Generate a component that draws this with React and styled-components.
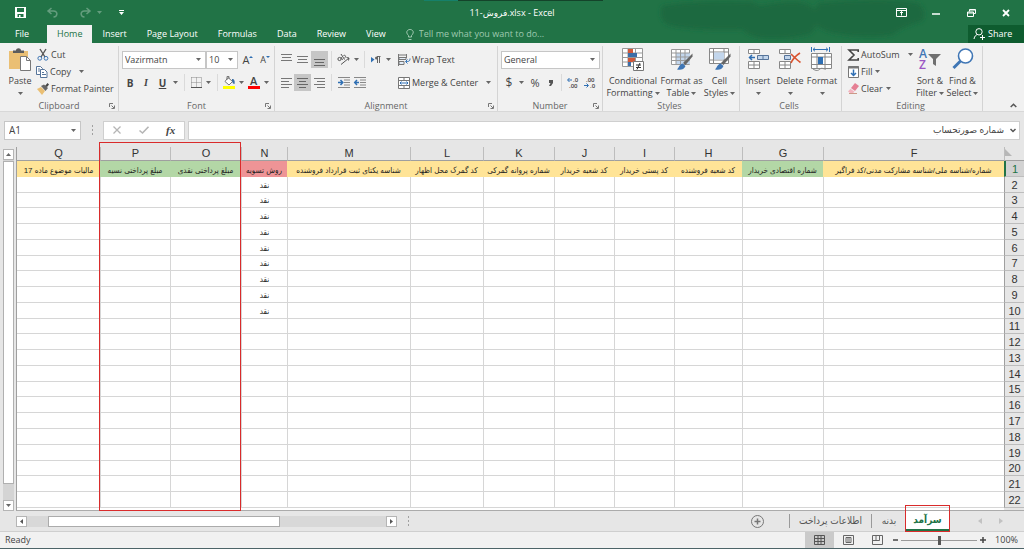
import { useState } from "react";
import styled, { createGlobalStyle } from "styled-components";

const GlobalStyle = createGlobalStyle`
  *, *::before, *::after {
    box-sizing: border-box;
  }
  body {
    margin: 0;
    background: #e6e6e6;
  }
  button, input, select {
    font: inherit;
    color: inherit;
    margin: 0;
    padding: 0;
    border: none;
    border-radius: 0;
    background: none;
    outline: none;
  }
`;

const Window = styled.div`
  display: flex;
  flex-direction: column;
  min-height: 100vh;
  background: #e6e6e6;
  color: #444;
  font-family: "Open Sans", "DejaVu Sans", sans-serif;
  font-size: 9px;
  line-height: 12px;
  overflow: hidden;
  border-bottom: 1px solid #4d6468;
`;

/* ---------- title bar and tabs ---------- */

const Top = styled.header`
  position: relative;
  background: #217346;
  color: white;
`;

const Smudges = styled.svg`
  position: absolute;
  top: 0;
  right: 0;
  width: 600px;
  height: 43px;
`;

const TitleBar = styled.div`
  position: relative;
  display: grid;
  grid-template-columns: 1fr auto 1fr;
  align-items: center;
  height: 25px;
`;

const QuickAccess = styled.div`
  display: flex;
  align-items: center;
  padding-left: 14px;
`;

const WindowButtons = styled.div`
  display: flex;
  justify-content: flex-end;
  gap: 23px;
  padding-right: 12px;
`;

const IconButton = styled.button`
  display: flex;
  align-items: center;
  justify-content: center;
  flex: none;
  width: ${(p) => p.$w || 12}px;
  height: ${(p) => p.$h || 12}px;
  opacity: ${(p) => (p.$faded ? 0.3 : 1)};
  background: ${(p) => (p.$on ? "#c6c6c6" : "transparent")};
`;

const Title = styled.h1`
  margin: 0;
  font-size: 9px;
  font-weight: 400;
`;

const Tabs = styled.nav`
  position: relative;
  display: flex;
  height: 18px;
`;

const Tab = styled.button`
  padding: 0 10px;
  font-weight: 500;
  background: ${(p) => (p.$active ? "#f1f1f1" : "transparent")};
  color: ${(p) => (p.$active ? "#217346" : "white")};

  &:first-child {
    width: 47px;
    padding: 0 3px 0 0;
    text-align: center;
  }
`;

const TellMe = styled.label`
  display: flex;
  align-items: center;
  gap: 5px;
  margin-left: 10px;
  flex: 1;

  input {
    width: 140px;
  }
  input::placeholder {
    color: #9fc9b0;
    opacity: 1;
  }
`;

const Share = styled.button`
  display: flex;
  align-items: center;
  gap: 3px;
  width: 56px;
  padding-left: 5px;
  background: #0e5c2f;
`;

/* ---------- ribbon ---------- */

const RibbonBar = styled.section`
  display: flex;
  height: 69px;
  padding-top: 3px;
  background: #f1f1f1;
  border-bottom: 1px solid #d8d8d8;
`;

const GroupBox = styled.div`
  display: flex;
  flex-direction: column;
  flex: none;
  width: ${(p) => p.$w}px;
  border-right: 1px solid #d4d4d4;
`;

const GroupBody = styled.div`
  display: flex;
  flex: 1;
  min-height: 0;
  padding-left: ${(p) => p.$pad || 0}px;
`;

const GroupFoot = styled.div`
  display: flex;
  align-items: center;
  height: 11px;
  padding: 0 3px 0 14px;
  color: #666;

  span {
    flex: 1;
    text-align: center;
    padding-right: ${(p) => (p.$launcher ? 5 : 14)}px;
  }
`;

const BigButton = styled.button`
  display: flex;
  flex-direction: column;
  align-items: center;
  flex: none;
  width: ${(p) => p.$w}px;
  padding-top: 2px;
  white-space: nowrap;

  > svg {
    margin-bottom: 4px;
  }
`;

const Line = styled.span`
  display: flex;
  align-items: center;
  justify-content: center;
  gap: 2px;
  height: 12px;
`;

const Stack = styled.div`
  display: flex;
  flex-direction: column;
  flex: none;
  width: ${(p) => p.$w}px;
`;

const SmallButton = styled.button`
  display: flex;
  align-items: center;
  gap: 2px;
  height: 17px;
  white-space: nowrap;

  > svg:last-child {
    margin-left: ${(p) => p.$arrow || 1}px;
  }
`;

const ToolRow = styled.div`
  display: flex;
  align-items: center;
  height: 17px;
  margin-top: ${(p) => p.$top || 0}px;
`;

const Divider = styled.i`
  width: 1px;
  height: 17px;
  margin: 0 ${(p) => p.$m || 3}px;
  background: #dadada;
`;

const Letter = styled.b`
  font-size: ${(p) => p.$size || 10}px;
  font-weight: ${(p) => (p.$light ? 500 : 700)};
  font-style: ${(p) => (p.$italic ? "italic" : "normal")};
  font-family: ${(p) => (p.$serif ? '"Liberation Serif", serif' : "inherit")};
  text-decoration: ${(p) => (p.$underline ? "underline" : "none")};
`;

const Field = styled.label`
  display: flex;
  align-items: center;
  width: ${(p) => p.$w}px;
  height: ${(p) => p.$h || 18}px;
  padding-right: 4px;
  border: 1px solid #c6c6c6;
  background: white;

  select,
  input {
    appearance: none;
    flex: 1;
    min-width: 0;
    padding-left: ${(p) => p.$pad || 2}px;
  }
  input {
    font-size: 10px;
  }
`;

const Collapse = styled.div`
  display: flex;
  flex: 1;
  align-items: flex-end;
  justify-content: flex-end;
  padding-right: 5px;
`;

/* ---------- formula bar ---------- */

const FormulaRow = styled.div`
  display: flex;
  align-items: center;
  height: 28px;
  padding: 8px 4px 0;
`;

const FormulaButtons = styled.div`
  display: flex;
  align-items: center;
  justify-content: space-around;
  width: 82px;
  height: 19px;
  margin-right: 3px;
  border: 1px solid #cfcfcf;
  background: white;
`;

const FormulaField = styled.label`
  display: flex;
  flex: 1;
  align-items: center;
  height: 19px;
  padding-right: 3px;
  border: 1px solid #cfcfcf;
  background: white;

  input {
    flex: 1;
    padding-right: 6px;
  }
`;

const Dots = styled.span`
  display: flex;
  flex-direction: column;
  align-items: center;
  gap: 2px;
  width: 22px;

  &::before,
  &::after,
  i {
    content: "";
    width: 1px;
    height: 2px;
    background: #a0a0a0;
  }
`;

/* ---------- sheet ---------- */

const Sheet = styled.main`
  position: relative;
  display: flex;
  flex: 1;
  padding-top: 7px;
`;

const VScroll = styled.div`
  display: flex;
  flex-direction: column;
  width: 11px;
  margin: 2px 2px 0 3px;
  background: #d4d4d4;
`;

const ScrollArrow = styled.button`
  display: flex;
  align-items: center;
  justify-content: center;
  width: 11px;
  height: 11px;
  border: 1px solid #b5b5b5;
  background: white;
`;

const VThumb = styled.div`
  flex: 1;
  margin: 1px 0 16px;
  border: 1px solid #b0b0b0;
  background: white;
`;

const GridArea = styled.div`
  flex: 1;
  display: flex;
  min-width: 0;
  padding-bottom: 2px;
  border-left: 1px solid #9f9f9f;
  border-bottom: 1px solid #ababab;
  background: linear-gradient(to left, #e6e6e6 20px, white 20px);
`;

const Grid = styled.table`
  flex: 1;
  table-layout: fixed;
  width: 100%;
  border-collapse: separate;
  border-spacing: 0;
  font-family: "Liberation Sans", "DejaVu Sans Condensed", "DejaVu Sans", sans-serif;
  font-size: 8px;
  line-height: 13px;

  th,
  td {
    padding: 0;
    text-align: center;
    vertical-align: bottom;
    font-weight: 400;
    white-space: nowrap;
    overflow: hidden;
  }
`;

const ColHead = styled.th`
  height: 14px;
  background: #e6e6e6;
  border-left: 1px solid #bdbdbd;
  border-bottom: 1px solid #9f9f9f;
  color: #333;
  font-size: 11px;

  &:last-child {
    border-left: none;
  }
`;

const Corner = styled.th`
  height: 14px;
  background: #e6e6e6;
  border-left: 1px solid #bdbdbd;
  border-bottom: 1px solid #9f9f9f;

  svg {
    display: block;
    margin: 0 12px 4px 0;
  }
`;

const RowHead = styled.th`
  border-left: ${(p) => (p.$active ? "2px solid #217346" : "1px solid #9f9f9f")};
  border-bottom: 1px solid #bdbdbd;
  background: ${(p) => (p.$active ? "#d2d2d2" : "#e6e6e6")};
  color: ${(p) => (p.$active ? "#217346" : "#333")};
  font-size: 11px;
`;

const Cell = styled.td`
  border-left: 1px solid #d6d6d6;
  border-bottom: 1px solid #d6d6d6;
  color: #222;

  &:last-child {
    border-left: none;
  }
`;

const HeadCell = styled.td`
  background: ${(p) => p.$fill};
  color: #222;
`;

const Highlight = styled.div`
  position: absolute;
  top: 2px;
  bottom: 0;
  left: 99px;
  width: 142px;
  border: 1px solid #d92b2b;
  pointer-events: none;
`;

/* ---------- sheet tabs and status bar ---------- */

const BottomBar = styled.div`
  display: flex;
  align-items: center;
  height: 21px;
  padding-left: 16px;
  border-bottom: 1px solid #cfcfcf;
`;

const HTrack = styled.div`
  flex: none;
  width: 359px;
  height: 11px;
  padding-left: 21px;
  background: #d8d8d8;

  div {
    width: 232px;
    height: 11px;
    border: 1px solid #ababab;
    background: white;
  }
`;

const SheetTabs = styled.div`
  display: flex;
  flex: 1;
  align-items: center;
  align-self: stretch;
  justify-content: flex-end;
  font-family: "DejaVu Sans Condensed", "DejaVu Sans", sans-serif;
  font-size: 10px;
`;

const SheetTab = styled.button`
  position: relative;
  width: ${(p) => p.$w}px;
  height: ${(p) => (p.$active ? 20 : 14)}px;
  border-left: ${(p) => (p.$line ? "1px solid #9a9a9a" : "none")};
  border-bottom: ${(p) => (p.$active ? "2px solid #217346" : "none")};
  background: ${(p) => (p.$active ? "white" : "transparent")};
  color: ${(p) => (p.$active ? "#217346" : "#555")};
  font-weight: ${(p) => (p.$active ? 700 : 400)};
`;

const TabMark = styled.span`
  position: absolute;
  top: -6px;
  right: -1px;
  bottom: -3px;
  left: -1px;
  border: 1px solid #d92b2b;
`;

const AddSheet = styled.button`
  display: flex;
  margin-right: 25px;
`;

const TabArrows = styled.div`
  display: flex;
  gap: 17px;
  padding: 0 21px 0 29px;
`;

const StatusBar = styled.footer`
  display: flex;
  align-items: center;
  height: 16px;
  padding: 0 6px 0 5px;
  background: #f1f1f1;

  > span:first-child {
    flex: 1;
  }
`;

const ViewButton = styled.button`
  display: flex;
  align-items: center;
  justify-content: center;
  width: 29px;
  height: 16px;
  background: ${(p) => (p.$on ? "#cacaca" : "transparent")};
`;

const Zoom = styled.input`
  appearance: none;
  width: 76px;
  height: 12px;
  margin: 0 2px;
  background: linear-gradient(#9a9a9a, #9a9a9a) center / 100% 1px no-repeat;

  &::-webkit-slider-thumb {
    appearance: none;
    width: 3px;
    height: 9px;
    background: #555;
  }
`;

const Percent = styled.span`
  width: 32px;
  text-align: right;
`;

/* ---------- drawings ---------- */

const Drawing = styled.svg`
  flex: none;
  overflow: visible;
`;

const Svg = ({ w, h, box, children, ...rest }) => (
  <Drawing
    width={w}
    height={h || w}
    viewBox={box || `0 0 ${w} ${h || w}`}
    fill="none"
    stroke="currentColor"
    aria-hidden="true"
    {...rest}
  >
    {children}
  </Drawing>
);

const Caret = ({ color = "#666" }) => (
  <Svg w={5} h={3} stroke="none">
    <path d="M0 0h5L2.500 3z" fill={color} />
  </Svg>
);

const Launcher = () => (
  <Svg w={6} stroke="#777">
    <path d="M.5 4V.5H4M2.500 2.500 5 5M5.500 2.500v3h-3" />
  </Svg>
);

const SaveIcon = () => (
  <Svg w={11} stroke="none">
    <path
      d="M0 0h11v11H0zM2 1v4h7V1zM2.500 7v3H4V8h1.500v2h3V7z"
      fill="white"
      fillRule="evenodd"
    />
  </Svg>
);

const UndoIcon = ({ flip }) => (
  <Svg w={11} stroke="white" strokeWidth="1.500">
    <g transform={flip ? "matrix(-1 0 0 1 11 0)" : undefined}>
      <path d="M4.500 1 1 4l3.500 3M1 4h5.500c5 0 4 6 0 6" />
    </g>
  </Svg>
);

const PasteIcon = () => (
  <Svg w={22} h={23}>
    <path d="M0 3h19v18H0z" fill="#eabf74" stroke="none" />
    <path d="M4 2.500h3c0-3 5-3 5 0h3V5H4z" fill="#5c5c5c" stroke="none" />
    <path d="M11.500 8.500h6l4 4v10h-10z" fill="white" stroke="#777" />
    <path d="M17.500 8.500v4h4" stroke="#777" />
  </Svg>
);

const CutIcon = () => (
  <Svg w={12}>
    <path d="M3 0l5 8M9 0 4 8" stroke="#555" strokeWidth="1.400" />
    <circle cx="2.800" cy="9.300" r="1.900" stroke="#3f76b5" />
    <circle cx="9" cy="9.300" r="1.900" stroke="#3f76b5" />
  </Svg>
);

const CopyIcon = () => (
  <Svg w={12} stroke="#56749a">
    <path d="M.5.5h4l2 2v6h-6z" fill="white" />
    <path d="M4.500 3.500h4l2.500 2.500v5.500H4.500z" fill="white" />
    <path d="M6 6.500h2M6 8.500h4M2 3h2M2 5h2" />
  </Svg>
);

const PainterIcon = () => (
  <Svg w={12} stroke="none">
    <path d="M0 6l4-2 4 4-3 4z" fill="#eabf74" />
    <path d="M4 3l3-1.500L11 5 8.500 8z" fill="#666" />
    <path d="M8 3l2.500-3L12 1.500 10 4z" fill="#444" />
  </Svg>
);

const BorderIcon = () => (
  <Svg w={11} stroke="#888">
    <path d="M.5.5h10v10M.5.5v10M5.500.5v10M.5 5.500h10" strokeDasharray="1 1" />
    <path d="M0 10.500h11" stroke="#555" />
  </Svg>
);

const FillIcon = () => (
  <Svg w={12} h={13}>
    <path d="M5 1.500l4.500 4L6 9 2 5.500z" fill="white" stroke="#777" />
    <path d="M4 4V.5h2V3" stroke="#777" />
    <path d="M9 3c2.500 0 3 2 2.500 5-1.500 0-2-1-2.500-3z" fill="#3b6ea5" stroke="none" />
    <path d="M0 10h12v3H0z" fill="#ffff00" stroke="none" />
  </Svg>
);

const Bars = ({ rows, len, color = "#777" }) => (
  <Svg w={11} h={12} stroke={color}>
    {rows.map((y, i) => (
      <path key={y} d={`M${len[i][0]} ${y + 0.5}h${len[i][1]}`} />
    ))}
  </Svg>
);

const OrientIcon = () => (
  <Svg w={13} h={11} stroke="#555">
    <circle cx="2.500" cy="5" r="1.600" />
    <path d="M4 3l1.500 3M4 0l3.500 5.500M6.500 1.500c2-1 3 1.500 1 2.500M4 10.500 12 4M9.500 3.500 12 4l-.5 2.500" />
  </Svg>
);

const DirectionIcon = () => (
  <Svg w={10} h={8} stroke="#666">
    <path d="M0 1l3.500 2.500L0 6.500z" fill="#2f6fb3" stroke="none" />
    <path d="M9.500.5H6M6.500 0v7M8.500 0v7" />
    <circle cx="5.500" cy="2" r="1.500" fill="#666" stroke="none" />
  </Svg>
);

const IndentIcon = ({ flip }) => (
  <Svg w={12} h={11} stroke="#888">
    <path d="M0 .5h12M6 3h6M6 5.500h6M6 8h6M0 10.500h12" />
    <path
      d={flip ? "M5 5.500H1M3 3 .7 5.500 3 8" : "M0 5.500h4M2.500 3l2.300 2.500L2.500 8"}
      stroke="#2f6fb3"
      strokeWidth="1.500"
    />
  </Svg>
);

const WrapIcon = () => (
  <Svg w={12} h={12} stroke="#777">
    <path d="M.5 0v12M8.500 0v4" />
    <path d="M1 1h7M1 3.500h7v2H1zM1 7.500h5v3H1z" fill="#e2ecf7" />
    <path d="M12 4.500c0 3-1.500 3-4 3M9.500 5.500l-2 2 2 2" stroke="#2f6fb3" />
  </Svg>
);

const MergeIcon = () => (
  <Svg w={12} h={12} stroke="#777">
    <path d="M.5.5h11v11H.5zM.5 3.500h11M.5 8.500h11M6 .5v3M6 8.500v3" fill="white" />
    <path d="M2 6h8M3.500 4.500 2 6l1.500 1.500M8.500 4.500 10 6 8.500 7.500" stroke="#2f6fb3" />
  </Svg>
);

const DecimalIcon = ({ less }) => (
  <Svg w={12} h={12} stroke="none">
    <text x={less ? 2 : 6} y="5" fontSize="6" fontWeight="600" fill="#444">
      {less ? ".00" : ".0"}
    </text>
    <text x={less ? 6 : 2} y="11" fontSize="6" fontWeight="600" fill="#444">
      {less ? ".0" : ".00"}
    </text>
    <path
      d={less ? "M0 8.500h4M2.500 6.500l2 2-2 2" : "M5 3H1M2.500 1l-2 2 2 2"}
      stroke="#2f6fb3"
      fill="none"
    />
  </Svg>
);

const ConditionalIcon = () => (
  <Svg w={22} h={23} stroke="#999">
    <path d="M.5.5h20v18H.5zM.5 5h20M.5 9.500h20M.5 14h20M6 .5v18M13.500.5v18" fill="white" />
    <g stroke="none">
      <path d="M6 1h5v4H6zM6 10h7v4H6z" fill="#d0583a" />
      <path d="M6 5h9v4H6zM6 14h3v4H6z" fill="#3c6ea8" />
    </g>
    <path d="M11.500 13.500h10v9h-10z" fill="white" stroke="#777" />
    <path d="M14 17h5M14 19.500h5M18 15l-3 6.500" stroke="#333" />
  </Svg>
);

const Brush = () => (
  <>
    <path d="M21.500 5.500v3L14.500 17l-2.500-2z" fill="#666" stroke="none" />
    <path d="M11.500 15.500l3 2.500c-1.500 4-5 4-8.500 3.500 2-1.500 2-5 5.500-6z" fill="#3f76b5" stroke="none" />
  </>
);

const TableIcon = () => (
  <Svg w={22} h={23} stroke="#999">
    <path d="M.5 1.500h18v15H.5z" fill="white" />
    <path d="M5 5h14v11H5z" fill="#c3d6ec" stroke="none" />
    <path d="M.5 5h18M.5 9h18M.5 12.500h18M5 1.500v15M9.500 1.500v15M14 1.500v15" />
    <Brush />
  </Svg>
);

const StylesIcon = () => (
  <Svg w={22} h={23} stroke="#888">
    <path d="M.5.5h19v15H.5zM.5 4h19M.5 12h19M4.500.5v15M15 .5v15" fill="white" />
    <path d="M5 4.500h10v7H5z" fill="#c3d6ec" stroke="none" />
    <Brush />
  </Svg>
);

const InsertIcon = () => (
  <Svg w={21} h={23} stroke="#888">
    <path d="M.5 1.500h11v4H.5zM6 1.500v4M.5 13.500h11v7H.5zM.5 17h11M6 13.500v7" fill="white" />
    <path d="M9.500 7.500h11v4h-11zM15 7.500v4" fill="#c3d6ec" stroke="#56749a" />
    <path d="M7 9.500H2M4 7 1.500 9.500 4 12" stroke="#2f6fb3" strokeWidth="1.500" />
  </Svg>
);

const DeleteIcon = () => (
  <Svg w={22} h={23} stroke="#888">
    <path d="M.5 1.500h11v4H.5zM6 1.500v4M.5 13.500h11v7H.5zM.5 17h11M6 13.500v7" fill="white" />
    <path d="M5.500 7.500h6v4h-6z" fill="#c3d6ec" stroke="#56749a" />
    <path d="M12 6c3 3 6 6 9.500 8.500M21 5c-4 2.500-7 5.500-9 10" stroke="#d9532f" strokeWidth="1.600" />
  </Svg>
);

const FormatIcon = () => (
  <Svg w={22} h={23} stroke="#888">
    <path d="M.5-1v5M18.500-1v5M2 1.500h15M4-.3 2 1.500l2 1.800M15-.3l2 1.800-2 1.800" stroke="#2f6fb3" />
    <path d="M.5 5.500h20v15H.5zM.5 9h20M.5 16.500h20M6 5.500v15M14 5.500v15" fill="white" />
    <path d="M7 9h5v7H7z" fill="#2f6fb3" stroke="none" />
    <path d="M2 21c3 2 5 2 7 0s5 1 6 0" />
  </Svg>
);

const SigmaIcon = () => (
  <Svg w={11} h={12} stroke="#444" strokeWidth="1.600">
    <path d="M10.200 3V1H1l5 5-5 5h9.200V9" />
  </Svg>
);

const FillDownIcon = () => (
  <Svg w={11} h={12} stroke="#777">
    <path d="M.5.5h10v11H.5z" fill="white" />
    <path d="M0 1.500h11" strokeWidth="2" />
    <path d="M5.500 3.500v6M3 7l2.500 2.500L8 7" stroke="#2f6fb3" strokeWidth="1.500" />
  </Svg>
);

const EraserIcon = () => (
  <Svg w={11} h={11} stroke="none">
    <path d="M3 5l4-5 4 3-4 5z" fill="#e57f93" />
    <path d="M2.500 5.700l4 3L5 10H2L0 8.500z" fill="#f2b4bf" />
    <path d="M1 10.500h8" stroke="#c98" />
  </Svg>
);

const SortIcon = () => (
  <Svg w={22} h={23} stroke="none">
    <text x="0" y="10" fontSize="12" fontWeight="600" fill="#3f76b5">A</text>
    <text x="0" y="21" fontSize="12" fontWeight="600" fill="#9b57c4">Z</text>
    <path d="M9 6h13l-5 5v7l-3-2v-5z" fill="#707070" />
  </Svg>
);

const FindIcon = () => (
  <Svg w={22} h={23} stroke="#3f76b5">
    <circle cx="13.500" cy="8" r="7" fill="white" strokeWidth="1.600" />
    <path d="M8.500 13 1.500 20" strokeWidth="3" />
  </Svg>
);

/* ---------- data ---------- */

const YELLOW = "#ffe497";
const GREEN = "#b3d7a6";
const RED = "#ee9496";

const tabs = ["File", "Home", "Insert", "Page Layout", "Formulas", "Data", "Review", "View"];

const columns = [
  { id: "F", title: "شماره/شناسه ملی/شناسه مشارکت مدنی/کد فراگیر", fill: YELLOW },
  { id: "G", width: 81, title: "شماره اقتصادی خریدار", fill: GREEN },
  { id: "H", width: 68, title: "کد شعبه فروشنده", fill: YELLOW },
  { id: "I", width: 60, title: "کد پستی خریدار", fill: YELLOW },
  { id: "J", width: 60, title: "کد شعبه خریدار", fill: YELLOW },
  { id: "K", width: 71, title: "شماره پروانه گمرکی", fill: YELLOW },
  { id: "L", width: 73, title: "کد گمرک محل اظهار", fill: YELLOW },
  { id: "M", width: 123, title: "شناسه یکتای ثبت قرارداد فروشنده", fill: YELLOW },
  { id: "N", width: 46, title: "روش تسویه", fill: RED },
  { id: "O", width: 71, title: "مبلغ پرداختی نقدی", fill: GREEN },
  { id: "P", width: 70, title: "مبلغ پرداختی نسیه", fill: GREEN },
  { id: "Q", width: 83, title: "مالیات موضوع ماده 17", fill: YELLOW },
];

const rows = Array.from({ length: 21 }, (_, i) => i + 2);

const Group = ({ name, w, pad, launcher, children }) => (
  <GroupBox $w={w}>
    <GroupBody $pad={pad}>{children}</GroupBody>
    <GroupFoot $launcher={launcher}>
      <span>{name}</span>
      {launcher && <Launcher />}
    </GroupFoot>
  </GroupBox>
);

const Ribbon = () => (
  <RibbonBar>
    <Group name="Clipboard" w={119} pad={4} launcher>
      <BigButton $w={32}>
        <PasteIcon />
        <Line>Paste</Line>
        <Line>
          <Caret />
        </Line>
      </BigButton>
      <Stack $w={80}>
        <SmallButton>
          <CutIcon />
          Cut
        </SmallButton>
        <SmallButton $arrow={6}>
          <CopyIcon />
          Copy
          <Caret />
        </SmallButton>
        <SmallButton>
          <PainterIcon />
          Format Painter
        </SmallButton>
      </Stack>
    </Group>

    <Group name="Font" w={156} pad={3} launcher>
      <Stack $w={150}>
        <ToolRow $top={5}>
          <Field $w={84}>
            <select aria-label="Font" defaultValue="Vazirmatn">
              <option>Vazirmatn</option>
            </select>
            <Caret />
          </Field>
          <Field $w={32}>
            <select aria-label="Font size" defaultValue="10">
              <option>10</option>
            </select>
            <Caret />
          </Field>
          <IconButton $w={20} aria-label="Increase font size">
            <Letter $size={11} $light>A</Letter>
            <Svg w={4} h={8} stroke="none">
              <path d="M0 2h4L2 0z" fill="#2f6fb3" />
            </Svg>
          </IconButton>
          <IconButton $w={14} aria-label="Decrease font size">
            <Letter $size={9} $light>A</Letter>
            <Svg w={4} h={8} stroke="none">
              <path d="M0 0h4L2 2z" fill="#2f6fb3" />
            </Svg>
          </IconButton>
        </ToolRow>
        <ToolRow $top={6}>
          <IconButton $w={16} aria-label="Bold">
            <Letter>B</Letter>
          </IconButton>
          <IconButton $w={16} aria-label="Italic">
            <Letter $italic $serif>I</Letter>
          </IconButton>
          <IconButton $w={17} aria-label="Underline">
            <Letter $underline>U</Letter>
          </IconButton>
          <IconButton $w={9} aria-label="Underline style">
            <Caret />
          </IconButton>
          <Divider $m={4} />
          <IconButton $w={14} aria-label="Borders">
            <BorderIcon />
          </IconButton>
          <IconButton $w={11} aria-label="Border style">
            <Caret />
          </IconButton>
          <Divider $m={3} />
          <IconButton $w={16} $h={15} aria-label="Fill color">
            <FillIcon />
          </IconButton>
          <IconButton $w={9} aria-label="Fill color list">
            <Caret />
          </IconButton>
          <IconButton $w={16} $h={15} aria-label="Font color">
            <Svg w={12} h={13} stroke="none">
              <text x="2" y="9" fontSize="11" fontWeight="600" fill="#444">A</text>
              <path d="M0 10h12v3H0z" fill="#ff0000" />
            </Svg>
          </IconButton>
          <IconButton $w={9} aria-label="Font color list">
            <Caret />
          </IconButton>
        </ToolRow>
      </Stack>
    </Group>

    <Group name="Alignment" w={223} pad={3} launcher>
      <Stack $w={120}>
        <ToolRow $top={5}>
          <IconButton $w={16} $h={17} aria-label="Top align">
            <Bars rows={[0, 3, 6]} len={[[0, 11], [1, 9], [0, 11]]} />
          </IconButton>
          <IconButton $w={17} $h={17} aria-label="Middle align">
            <Bars rows={[2, 5, 8]} len={[[0, 11], [1, 9], [0, 11]]} />
          </IconButton>
          <IconButton $w={17} $h={17} $on aria-label="Bottom align">
            <Bars rows={[5, 8, 11]} len={[[0, 11], [1, 9], [0, 11]]} color="#666" />
          </IconButton>
          <Divider />
          <IconButton $w={17} aria-label="Orientation">
            <OrientIcon />
          </IconButton>
          <IconButton $w={9} aria-label="Orientation list">
            <Caret />
          </IconButton>
          <Divider />
          <IconButton $w={15} aria-label="Text direction">
            <DirectionIcon />
          </IconButton>
          <IconButton $w={10} aria-label="Text direction list">
            <Caret />
          </IconButton>
        </ToolRow>
        <ToolRow $top={6}>
          <IconButton $w={16} $h={17} aria-label="Align left">
            <Bars rows={[1, 4, 7, 10]} len={[[0, 11], [0, 8], [0, 11], [0, 8]]} />
          </IconButton>
          <IconButton $w={17} $h={17} $on aria-label="Center">
            <Bars rows={[1, 4, 7, 10]} len={[[0, 11], [2, 7], [0, 11], [2, 7]]} color="#666" />
          </IconButton>
          <IconButton $w={17} $h={17} aria-label="Align right">
            <Bars rows={[1, 4, 7, 10]} len={[[0, 11], [3, 8], [0, 11], [3, 8]]} />
          </IconButton>
          <Divider />
          <IconButton $w={17} aria-label="Decrease indent">
            <IndentIcon />
          </IconButton>
          <IconButton $w={16} aria-label="Increase indent">
            <IndentIcon flip />
          </IconButton>
        </ToolRow>
      </Stack>
      <Stack $w={98}>
        <ToolRow $top={5}>
          <SmallButton>
            <WrapIcon />
            <span>Wrap Text</span>
          </SmallButton>
        </ToolRow>
        <ToolRow $top={6}>
          <SmallButton $arrow={6}>
            <MergeIcon />
            Merge &amp; Center
            <Caret />
          </SmallButton>
        </ToolRow>
      </Stack>
    </Group>

    <Group name="Number" w={105} pad={3} launcher>
      <Stack $w={99}>
        <ToolRow $top={5}>
          <Field $w={99}>
            <select aria-label="Number format" defaultValue="General">
              <option>General</option>
            </select>
            <Caret />
          </Field>
        </ToolRow>
        <ToolRow $top={6}>
          <IconButton $w={16} aria-label="Currency">
            <Letter $size={12} $light>$</Letter>
          </IconButton>
          <IconButton $w={9} aria-label="Currency list">
            <Caret />
          </IconButton>
          <IconButton $w={18} aria-label="Percent">
            <Letter $size={11} $light>%</Letter>
          </IconButton>
          <IconButton $w={14} aria-label="Comma style">
            <Svg w={4} h={6} stroke="none">
              <path d="M0 0h4v3L2 6H0l1.500-3H0z" fill="#555" />
            </Svg>
          </IconButton>
          <Divider $m={3} />
          <IconButton $w={16} aria-label="Increase decimal">
            <DecimalIcon />
          </IconButton>
          <IconButton $w={17} aria-label="Decrease decimal">
            <DecimalIcon less />
          </IconButton>
        </ToolRow>
      </Stack>
    </Group>

    <Group name="Styles" w={137} pad={3}>
      <BigButton $w={54}>
        <ConditionalIcon />
        <Line>Conditional</Line>
        <Line>
          Formatting <Caret />
        </Line>
      </BigButton>
      <BigButton $w={43}>
        <TableIcon />
        <Line>Format as</Line>
        <Line>
          Table <Caret />
        </Line>
      </BigButton>
      <BigButton $w={33}>
        <StylesIcon />
        <Line>Cell</Line>
        <Line>
          Styles <Caret />
        </Line>
      </BigButton>
    </Group>

    <Group name="Cells" w={102} pad={2}>
      <BigButton $w={32}>
        <InsertIcon />
        <Line>Insert</Line>
        <Line>
          <Caret />
        </Line>
      </BigButton>
      <BigButton $w={32}>
        <DeleteIcon />
        <Line>Delete</Line>
        <Line>
          <Caret />
        </Line>
      </BigButton>
      <BigButton $w={32}>
        <FormatIcon />
        <Line>Format</Line>
        <Line>
          <Caret />
        </Line>
      </BigButton>
    </Group>

    <Group name="Editing" w={141} pad={6}>
      <Stack $w={66}>
        <SmallButton $arrow={6}>
          <SigmaIcon />
          AutoSum
          <Caret />
        </SmallButton>
        <SmallButton>
          <FillDownIcon />
          Fill
          <Caret />
        </SmallButton>
        <SmallButton>
          <EraserIcon />
          Clear
          <Caret />
        </SmallButton>
      </Stack>
      <BigButton $w={32}>
        <SortIcon />
        <Line>Sort &amp;</Line>
        <Line>
          Filter <Caret />
        </Line>
      </BigButton>
      <BigButton $w={33}>
        <FindIcon />
        <Line>Find &amp;</Line>
        <Line>
          Select <Caret />
        </Line>
      </BigButton>
    </Group>

    <Collapse>
      <IconButton aria-label="Collapse the ribbon">
        <Svg w={7} h={5} stroke="#555" strokeWidth="1.500">
          <path d="M.7 4 3.500 1.200 6.300 4" />
        </Svg>
      </IconButton>
    </Collapse>
  </RibbonBar>
);

const App = () => {
  const [activeTab, setActiveTab] = useState("Home");
  const [formula, setFormula] = useState("شماره صورتحساب");
  const [zoom, setZoom] = useState(50);

  return (
    <Window>
      <GlobalStyle />
      <Top>
        <Smudges viewBox="0 0 600 43" aria-hidden="true">
          <defs>
            <filter id="soft">
              <feGaussianBlur stdDeviation="2" />
            </filter>
          </defs>
          <path d="M0 0h34v1H0z" fill="#16806a" />
          <path d="M34 0h145v1H34z" fill="#14432a" />
          <g fill="#1d693f" filter="url(#soft)">
            <path d="M238 6q30-6 90-4 20 8 12 20-6 8-36 8-45 0-62-6-8-8-4-18z" />
            <path d="M312 14q10-8 50-12 20-2 30 8 4 16-6 24-20 6-50 4-22-4-24-24z" />
            <path d="M394 3q70-6 100 0 10 8 4 18-20 6-30 14-30 4-60-2-18-6-20-14z" />
          </g>
        </Smudges>
        <TitleBar>
          <QuickAccess>
            <IconButton aria-label="Save">
              <SaveIcon />
            </IconButton>
            <IconButton $w={53} $faded aria-label="Undo">
              <UndoIcon />
            </IconButton>
            <IconButton $w={12} $faded aria-label="Redo">
              <UndoIcon flip />
            </IconButton>
            <IconButton $w={16} $faded aria-label="Redo list">
              <Caret color="white" />
            </IconButton>
            <IconButton $w={28} aria-label="Customize toolbar">
              <Svg w={5} h={5} stroke="none">
                <path d="M0 0h5v1H0zM0 2h5L2.500 5z" fill="white" />
              </Svg>
            </IconButton>
          </QuickAccess>
          <Title>11-فروش.xlsx - Excel</Title>
          <WindowButtons>
            <IconButton aria-label="Ribbon display options">
              <Svg w={11} h={9} stroke="white">
                <path d="M.5.5h10v8H.5zM.5 2.500h10M5.500 7.500v-4M4 5l1.500-1.500L7 5" />
              </Svg>
            </IconButton>
            <IconButton aria-label="Minimize">
              <Svg w={8} h={7} stroke="white" strokeWidth="1.500">
                <path d="M0 5h8" />
              </Svg>
            </IconButton>
            <IconButton aria-label="Restore">
              <Svg w={9} h={8} stroke="white">
                <path d="M2.500 2.500V.5h6v4h-2M.5 3h6v4.500h-6zM.5 4h6M2.500 1h6" />
              </Svg>
            </IconButton>
            <IconButton aria-label="Close">
              <Svg w={8} stroke="white" strokeWidth="1.800">
                <path d="M1 1l6 6M7 1 1 7" />
              </Svg>
            </IconButton>
          </WindowButtons>
        </TitleBar>
        <Tabs>
          {tabs.map((tab) => (
            <Tab key={tab} $active={tab === activeTab} onClick={() => setActiveTab(tab)}>
              {tab}
            </Tab>
          ))}
          <TellMe>
            <Svg w={8} h={11} stroke="#9fc9b0">
              <path d="M2.500 8V6.500C-1 3 1.500.5 4 .5S9 3 5.500 6.500V8zM2.500 10.500h3" />
            </Svg>
            <input aria-label="Tell me" placeholder="Tell me what you want to do..." />
          </TellMe>
          <Share>
            <Svg w={12} h={12} stroke="white">
              <circle cx="6" cy="3.800" r="3.200" />
              <path d="M1 11c.5-3 2-4 3.500-4.500M9.500 7v5M7 9.500h5" />
            </Svg>
            Share
          </Share>
        </Tabs>
      </Top>

      <Ribbon />

      <FormulaRow>
        <Field $w={77} $h={19} $pad={4}>
          <input aria-label="Name box" defaultValue="A1" />
          <Caret />
        </Field>
        <Dots>
          <i />
        </Dots>
        <FormulaButtons>
          <IconButton aria-label="Cancel">
            <Svg w={8} stroke="#b5b5b5" strokeWidth="1.300">
              <path d="M.5.5l7 7M7.500.5l-7 7" />
            </Svg>
          </IconButton>
          <IconButton aria-label="Enter">
            <Svg w={10} h={8} stroke="#b5b5b5" strokeWidth="1.600">
              <path d="M.5 4.500 3.500 7 9.500.7" />
            </Svg>
          </IconButton>
          <IconButton aria-label="Insert function">
            <Letter $size={11} $italic $serif>
              fx
            </Letter>
          </IconButton>
        </FormulaButtons>
        <FormulaField>
          <input
            aria-label="Formula bar"
            dir="rtl"
            value={formula}
            onChange={(e) => setFormula(e.target.value)}
          />
          <Svg w={6} h={5} stroke="#555" strokeWidth="1.500">
            <path d="M.5 1 3 3.500 5.500 1" />
          </Svg>
        </FormulaField>
      </FormulaRow>

      <Sheet>
        <VScroll>
          <ScrollArrow aria-label="Scroll up">
            <Svg w={5} h={3} stroke="none">
              <path d="M0 3h5L2.500 0z" fill="#666" />
            </Svg>
          </ScrollArrow>
          <VThumb />
          <ScrollArrow aria-label="Scroll down">
            <Caret />
          </ScrollArrow>
        </VScroll>
        <GridArea>
          <Grid dir="rtl">
            <colgroup>
              <col style={{ width: 20 }} />
              {columns.map((col) => (
                <col key={col.id} style={{ width: col.width }} />
              ))}
            </colgroup>
            <thead>
              <tr>
                <Corner aria-label="Select all">
                  <Svg w={7} stroke="none">
                    <path d="M0 0v7h7z" fill="#b7b7b7" />
                  </Svg>
                </Corner>
                {columns.map((col) => (
                  <ColHead key={col.id}>{col.id}</ColHead>
                ))}
              </tr>
            </thead>
            <tbody>
              <tr>
                <RowHead $active>1</RowHead>
                {columns.map((col) => (
                  <HeadCell key={col.id} $fill={col.fill}>
                    {col.title}
                  </HeadCell>
                ))}
              </tr>
              {rows.map((row) => (
                <tr key={row}>
                  <RowHead>{row}</RowHead>
                  {columns.map((col) => (
                    <Cell key={col.id}>{col.id === "N" && row <= 10 ? "نقد" : ""}</Cell>
                  ))}
                </tr>
              ))}
            </tbody>
          </Grid>
        </GridArea>
        <Highlight />
      </Sheet>

      <BottomBar>
        <ScrollArrow aria-label="Scroll left">
          <Svg w={3} h={5} stroke="none">
            <path d="M3 0v5L0 2.500z" fill="#555" />
          </Svg>
        </ScrollArrow>
        <HTrack>
          <div />
        </HTrack>
        <ScrollArrow aria-label="Scroll right">
          <Svg w={3} h={5} stroke="none">
            <path d="M0 0v5l3-2.500z" fill="#555" />
          </Svg>
        </ScrollArrow>
        <Dots>
          <i />
        </Dots>
        <SheetTabs>
          <AddSheet aria-label="New sheet">
            <Svg w={13} stroke="#777">
              <circle cx="6.500" cy="6.500" r="6" />
              <path d="M3.500 6.500h6M6.500 3.500v6" strokeWidth="1.500" />
            </Svg>
          </AddSheet>
          <SheetTab $w={82} $line>اطلاعات پرداخت</SheetTab>
          <SheetTab $w={35} $line>بدنه</SheetTab>
          <SheetTab $w={43} $active>
            سرآمد
            <TabMark />
          </SheetTab>
          <TabArrows>
            <Svg w={4} h={6} stroke="none">
              <path d="M4 0v6L0 3z" fill="#c2c2c2" />
            </Svg>
            <Svg w={4} h={6} stroke="none">
              <path d="M0 0v6l4-3z" fill="#c2c2c2" />
            </Svg>
          </TabArrows>
        </SheetTabs>
      </BottomBar>

      <StatusBar>
        <span>Ready</span>
        <ViewButton $on aria-label="Normal view">
          <Svg w={11} h={10} stroke="#555">
            <path d="M.5.5h10v9H.5zM.5 3.500h10M.5 6.500h10M4 .5v9M7 .5v9" />
          </Svg>
        </ViewButton>
        <ViewButton aria-label="Page layout view">
          <Svg w={11} h={10} stroke="#666">
            <path d="M.5.5h10v9H.5zM3 2.500h5v5H3zM4 4h3M4 6h3" />
          </Svg>
        </ViewButton>
        <ViewButton aria-label="Page break view">
          <Svg w={11} h={10} stroke="#666">
            <path d="M.5.5h10v9H.5zM.5 5.500h7v-5M4 .5v5" />
          </Svg>
        </ViewButton>
        <IconButton $w={7} aria-label="Zoom out">
          <Svg w={5} h={6} strokeWidth="1.500">
            <path d="M0 3h5" />
          </Svg>
        </IconButton>
        <Zoom
          type="range"
          aria-label="Zoom"
          value={zoom}
          onChange={(e) => setZoom(Number(e.target.value))}
        />
        <IconButton $w={7} aria-label="Zoom in">
          <Svg w={6} h={6} strokeWidth="1.500">
            <path d="M0 3h6M3 0v6" />
          </Svg>
        </IconButton>
        <Percent>{zoom * 2}%</Percent>
      </StatusBar>
    </Window>
  );
};

export default App;
